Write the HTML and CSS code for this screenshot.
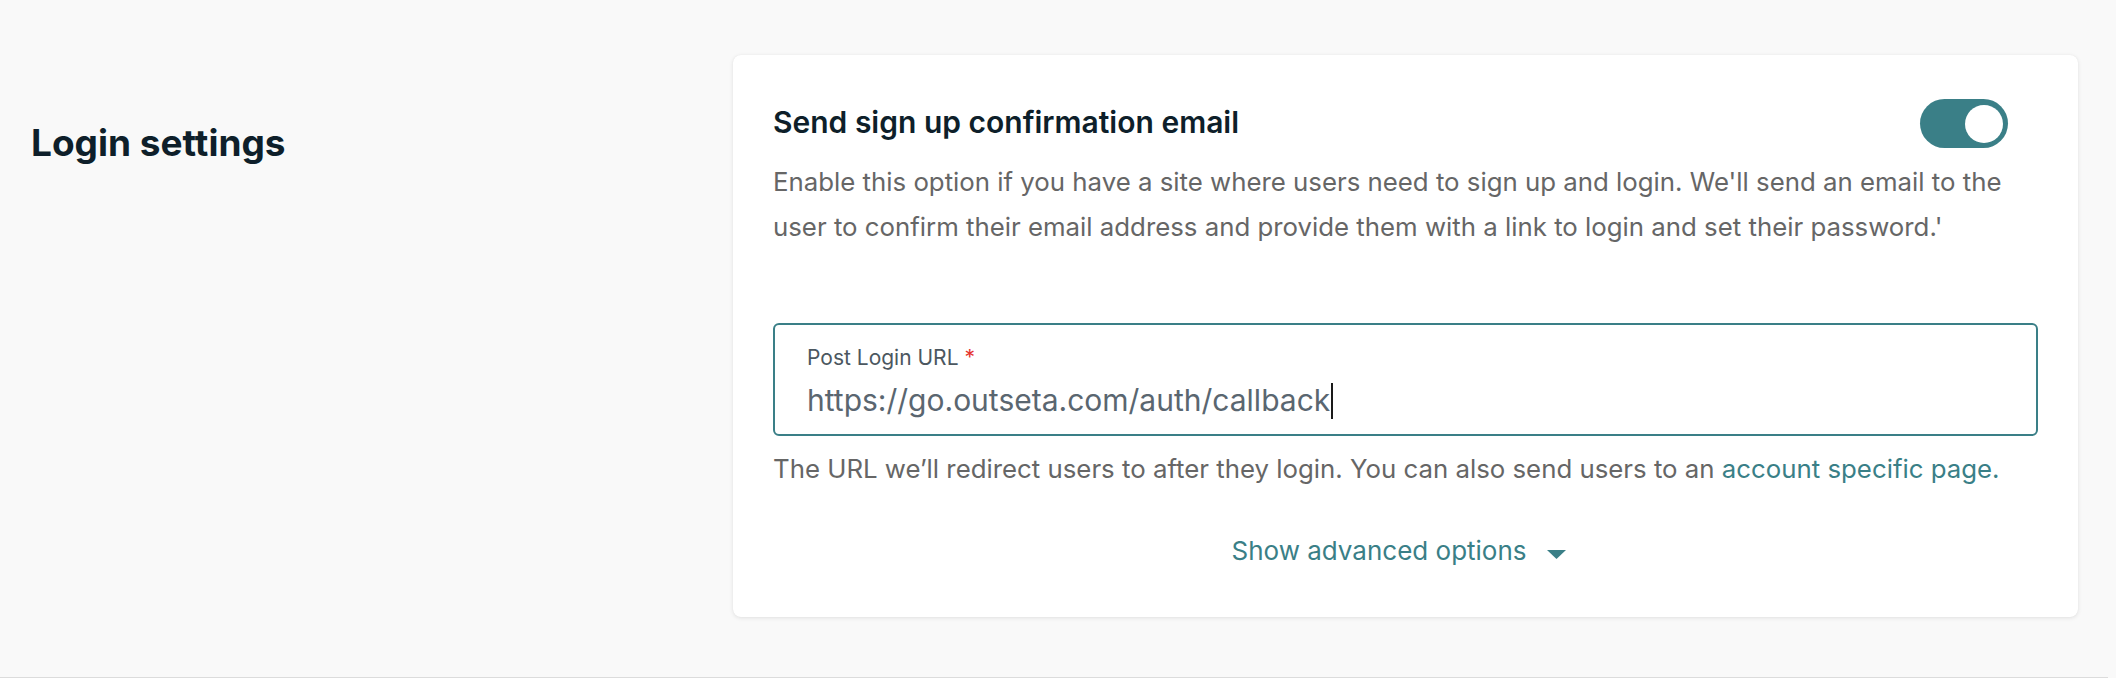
FILE: index.html
```html
<!DOCTYPE html>
<html lang="en">
<head>
<meta charset="utf-8">
<title>Login settings</title>
<link rel="stylesheet" href="styles.css">
</head>
<body>
<div class="page">
  <section class="settings-row">
    <div class="side">
      <h2 class="side-title">Login settings</h2>
    </div>
    <div class="card">
      <div class="option-head">
        <h3 class="option-title">Send sign up confirmation email</h3>
        <span class="toggle" role="switch" aria-checked="true"><span class="knob"></span></span>
      </div>
      <p class="option-desc">Enable this option if you have a site where users need to sign up and login. We'll send an email to the user to confirm their email address and provide them with a link to login and set their password.'</p>
      <div class="field">
        <label class="field-label">Post Login URL <span class="req">*</span></label>
        <div class="field-value">https://go.outseta.com/auth/callback<span class="caret"></span></div>
      </div>
      <p class="field-help">The URL we’ll redirect users to after they login. You can also send users to an <a class="link" href="#">account specific page.</a></p>
      <div class="advanced">
        <span class="advanced-text">Show advanced options</span>
        <svg class="advanced-arrow" width="19" height="9" viewBox="0 0 19 9"><path d="M0 0 H19 L9.5 9 Z" fill="#3a7f87"/></svg>
      </div>
    </div>
  </section>
</div>
</body>
</html>
```
FILE: styles.css
```css
* { box-sizing: border-box; }
html, body { margin: 0; padding: 0; }
body {
  background: #f9f9f9;
  font-family: "Inter", "Liberation Sans", sans-serif;
  color: #0e1f2a;
}
.page {
  height: 678px;
  border-bottom: 1px solid #dcdcdc;
  width: 2108px;
}
.settings-row {
  display: grid;
  grid-template-columns: 733px 1345px;
  padding-top: 55px;
}
.side { padding-left: 31px; padding-top: 66px; }
.side-title {
  margin: 0;
  font-size: 37px;
  font-weight: 700;
  line-height: 44px;
  color: #0e1f2a;
}
.card {
  background: #fff;
  border-radius: 8px;
  box-shadow: 0 1px 4px rgba(0,0,0,0.10), 0 0 1px rgba(0,0,0,0.06);
  padding: 44px 40px 0 40px;
  height: 562px;
}
.option-head {
  display: flex;
  align-items: center;
  justify-content: space-between;
  height: 49px;
}
.option-title {
  margin: -4px 0 0 0;
  font-size: 30px;
  font-weight: 600;
  line-height: 40px;
  color: #0e1f2a;
}
.toggle {
  width: 88px;
  height: 49px;
  border-radius: 25px;
  background: #3a7f87;
  margin-right: 30px;
  display: flex;
  align-items: center;
  justify-content: flex-end;
  padding-right: 5px;
}
.knob {
  width: 38px;
  height: 38px;
  border-radius: 50%;
  background: #fff;
}
.option-desc {
  margin: 11px 0 0 0;
  font-size: 25.8px;
  line-height: 45px;
  color: #666666;
}
.field {
  margin-top: 74px;
  border: 2px solid #3a7f87;
  border-radius: 6px;
  height: 113px;
  padding: 18px 32px 0 32px;
}
.field-label {
  display: block;
  font-size: 21px;
  line-height: 30px;
  color: #4b5760;
}
.req { color: #e5342f; }
.field-value {
  margin-top: 6px;
  font-size: 30px;
  line-height: 42px;
  color: #5a6670;
}
.caret {
  display: inline-block;
  width: 2px;
  height: 36px;
  background: #1a1a1a;
  vertical-align: -8px;
  margin-left: 1px;
}
.field-help {
  margin: 10px 0 0 0;
  font-size: 25.8px;
  line-height: 45px;
  color: #666666;
}
.link { color: #3a7f87; text-decoration: none; }
.advanced {
  margin-top: 42px;
  padding-right: 14px;
  display: flex;
  justify-content: center;
  align-items: center;
  gap: 20px;
  color: #3a7f87;
  font-size: 26px;
  line-height: 36px;
}
.advanced-arrow { display: block; margin-top: 6px; }
```
